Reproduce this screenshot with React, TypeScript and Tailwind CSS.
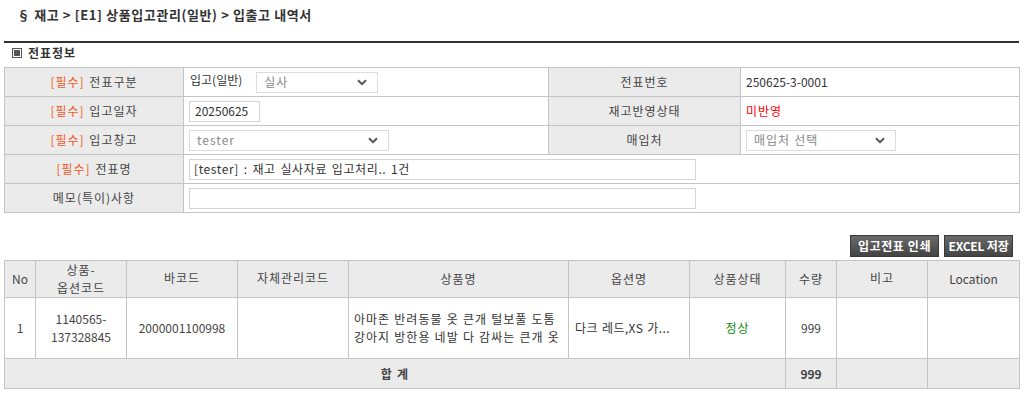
import React from "react";

const thBase = "border border-[#c4c4c4] bg-[#ebebeb] text-[#444]";
const th = `${thBase} font-normal tracking-[1px] [word-spacing:1px]`;
const td = "border border-[#c4c4c4] bg-white";
const ko = "tracking-[1px] [word-spacing:0.5px]";

function Chevron() {
  return (
    <svg width="10" height="7" viewBox="0 0 10 7" className="shrink-0" aria-hidden="true">
      <path d="M1 1.2 L5 5.2 L9 1.2" fill="none" stroke="#555" strokeWidth="2" />
    </svg>
  );
}

function FakeSelect({ value, width }: { value: string; width: string }) {
  return (
    <div
      className={`${width} flex h-[21px] items-center justify-between border border-[#dcdcdc] bg-white pl-[7px] pr-[10px] text-[#888] ${ko}`}
    >
      <span>{value}</span>
      <Chevron />
    </div>
  );
}

function TextBox({ value, width }: { value?: string; width: string }) {
  return (
    <div
      className={`${width} flex h-[21px] items-center whitespace-nowrap border border-[#d4d4d4] bg-white px-[4px] text-[#333] tracking-[0.6px] [word-spacing:1.5px]`}
    >
      {value}
    </div>
  );
}

function Label({ req, children }: { req?: boolean; children: React.ReactNode }) {
  return (
    <th className={th}>
      {req && <span className="text-[#f4581c]">[필수] </span>}
      {children}
    </th>
  );
}

export default function App() {
  return (
    <div className="min-h-[396px] bg-white pl-[4px] pr-[10px] font-['Noto_Sans_CJK_KR','Noto_Sans',sans-serif] text-[12px] leading-[16px] text-[#333]">
      <div className="pl-[13px] pt-[6px] text-[13px] font-bold leading-[18px] tracking-[0.6px] text-[#333]">
        § 재고 &gt; [E1] 상품입고관리(일반) &gt; 입출고 내역서
      </div>
      <div className="mt-[17px] h-[2px] bg-[#333]" />
      <div className="mt-[1px] flex h-[18px] items-center gap-[6px] pl-[8px] font-bold tracking-[1px] text-[#333]">
        <span className="flex h-[10px] w-[10px] items-center justify-center border border-[#555]">
          <span className="h-[6px] w-[6px] bg-[#555]" />
        </span>
        전표정보
      </div>

      <table className="mt-[5px] w-[1015px] table-fixed border-collapse">
        <colgroup>
          <col className="w-[179px]" />
          <col className="w-[365px]" />
          <col className="w-[192px]" />
          <col className="w-[279px]" />
        </colgroup>
        <tbody>
          <tr className="h-[29px]">
            <Label req>전표구분</Label>
            <td className={`${td} px-[6px]`}>
              <div className="flex items-center gap-[14px]">
                <span className="-mt-[4px] text-[#333]">입고(일반)</span>
                <FakeSelect value="실사" width="w-[122px]" />
              </div>
            </td>
            <Label>전표번호</Label>
            <td className={`${td} px-[5px] text-[#333]`}>250625-3-0001</td>
          </tr>
          <tr className="h-[29px]">
            <Label req>입고일자</Label>
            <td className={`${td} px-[5px]`}>
              <div className="flex h-[21px] w-[71px] items-center border border-[#d4d4d4] px-[5px] text-[#333]">
                20250625
              </div>
            </td>
            <Label>재고반영상태</Label>
            <td className={`${td} px-[5px] text-[#f00] ${ko}`}>미반영</td>
          </tr>
          <tr className="h-[29px]">
            <Label req>입고창고</Label>
            <td className={`${td} px-[5px]`}>
              <FakeSelect value="tester" width="w-[200px]" />
            </td>
            <Label>매입처</Label>
            <td className={`${td} px-[5px]`}>
              <FakeSelect value="매입처 선택" width="w-[150px]" />
            </td>
          </tr>
          <tr className="h-[29px]">
            <Label req>전표명</Label>
            <td className={`${td} px-[5px]`} colSpan={3}>
              <TextBox value="[tester] : 재고 실사자료 입고처리.. 1건" width="w-[507px]" />
            </td>
          </tr>
          <tr className="h-[29px]">
            <Label>메모(특이)사항</Label>
            <td className={`${td} px-[5px]`} colSpan={3}>
              <TextBox width="w-[507px]" />
            </td>
          </tr>
        </tbody>
      </table>

      <div className="mt-[22px] flex w-[1015px] justify-end gap-[5px] pr-[6px]">
        <button className="h-[22px] w-[89px] border border-[#3a3a3a] bg-gradient-to-b from-[#6a6a6a] to-[#444] text-[12px] font-bold tracking-[0.6px] text-white">
          입고전표 인쇄
        </button>
        <button className="h-[22px] w-[69px] border border-[#3a3a3a] bg-gradient-to-b from-[#6a6a6a] to-[#444] text-[12px] font-bold tracking-[-0.2px] text-white">
          EXCEL 저장
        </button>
      </div>

      <table className="mt-[3px] w-[1015px] table-fixed border-collapse text-center">
        <colgroup>
          <col className="w-[31px]" />
          <col className="w-[91px]" />
          <col className="w-[111px]" />
          <col className="w-[111px]" />
          <col className="w-[220px]" />
          <col className="w-[121px]" />
          <col className="w-[96px]" />
          <col className="w-[51px]" />
          <col className="w-[91px]" />
          <col className="w-[92px]" />
        </colgroup>
        <thead>
          <tr className="h-[37px]">
            <th className={`${thBase} font-normal`}>No</th>
            <th className={`${th} leading-[18px]`}>
              상품-
              <br />
              옵션코드
            </th>
            <th className={`${th} pb-[3px]`}>바코드</th>
            <th className={`${th} pb-[3px]`}>자체관리코드</th>
            <th className={th}>상품명</th>
            <th className={th}>옵션명</th>
            <th className={th}>상품상태</th>
            <th className={th}>수량</th>
            <th className={`${th} pb-[3px]`}>비고</th>
            <th className={`${thBase} font-normal`}>Location</th>
          </tr>
        </thead>
        <tbody>
          <tr className="h-[61px]">
            <td className={`${td} text-[#444]`}>1</td>
            <td className={`${td} leading-[18px] text-[#444]`}>
              1140565-
              <br />
              137328845
            </td>
            <td className={`${td} text-[#444]`}>2000001100998</td>
            <td className={td}></td>
            <td className={`${td} whitespace-nowrap px-[5px] text-left leading-[18px] text-[#333] ${ko}`}>
              아마존 반려동물 옷 큰개 털보풀 도톰
              <br />
              강아지 방한용 네발 다 감싸는 큰개 옷
            </td>
            <td className={`${td} whitespace-nowrap px-[6px] text-left text-[#333] tracking-[0.4px] [word-spacing:1px]`}>
              다크 레드,XS 가...
            </td>
            <td className={`${td} text-[#0b8a0b] ${ko}`}>정상</td>
            <td className={`${td} text-[#444]`}>999</td>
            <td className={td}></td>
            <td className={td}></td>
          </tr>
          <tr className="h-[30px]">
            <td className={`${thBase} font-bold ${ko}`} colSpan={7}>
              합 계
            </td>
            <td className={`${thBase} font-bold`}>999</td>
            <td className={thBase}></td>
            <td className={thBase}></td>
          </tr>
        </tbody>
      </table>
    </div>
  );
}
